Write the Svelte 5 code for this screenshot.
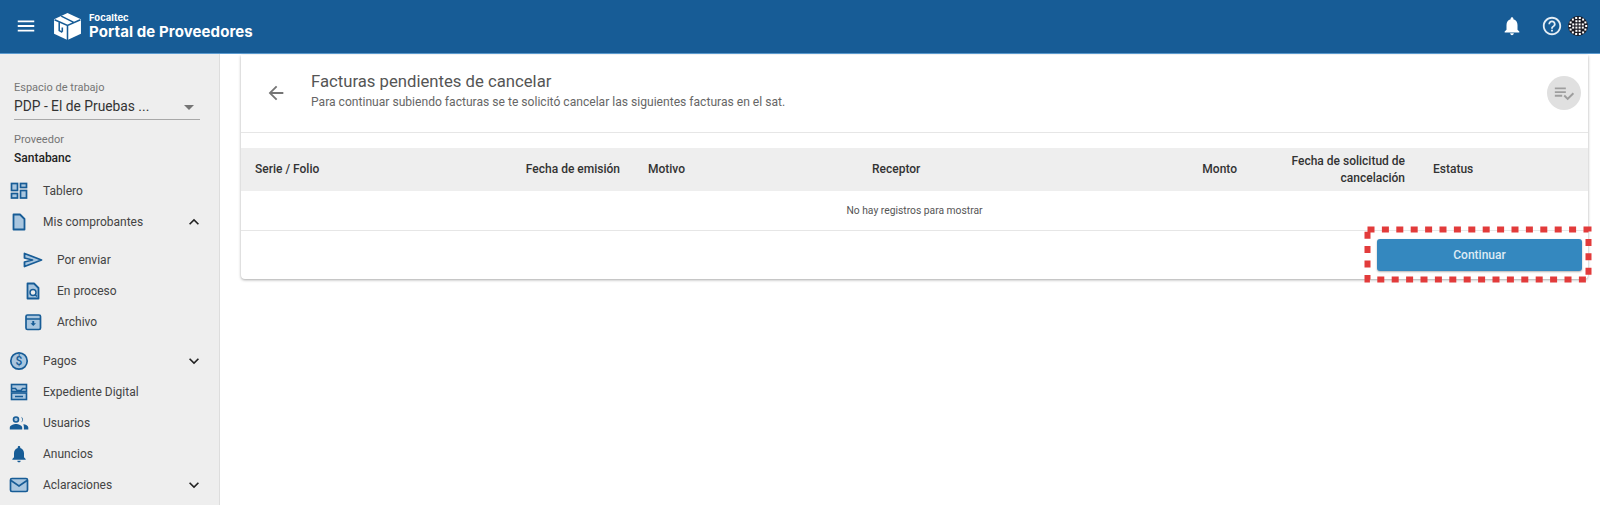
<script lang="ts">
  // avatar: ring of dots round a small centre grid
  const ring = Array.from({ length: 14 }, (_, i) => {
    const a = (i / 14) * Math.PI * 2;
    return { x: 10 + 8.2 * Math.cos(a), y: 10 + 8.2 * Math.sin(a) };
  });
  const grid: { x: number; y: number }[] = [];
  for (const x of [5.2, 8.4, 11.6, 14.8]) {
    for (const y of [5.2, 8.4, 11.6, 14.8]) {
      if (Math.hypot(x - 10, y - 10) < 6.4) grid.push({ x, y });
    }
  }
  const avatarDots = [...ring, ...grid];

  const columns = [
    { label: "Serie / Folio", cls: "" },
    { label: "Fecha de emisión", cls: "right" },
    { label: "Motivo", cls: "" },
    { label: "Receptor", cls: "" },
    { label: "Monto", cls: "right" },
    { label: "Fecha de solicitud de cancelación", cls: "right" },
    { label: "Estatus", cls: "" },
  ];
</script>

<div class="page">
  <header class="topbar">
    <button class="plain menu" aria-label="Menú">
      <svg viewBox="0 0 24 24" width="22" height="22"><path fill="#fff" d="M3 18h18v-2H3v2zm0-5h18v-2H3v2zm0-7v2h18V6H3z" /></svg>
    </button>
    <svg class="logo" viewBox="0 0 28 28" width="29" height="29">
      <path fill="#fff" d="M14 1 27 7v14L14 27 1 21V7z" />
      <path fill="none" stroke="#175c96" stroke-width="1.500" d="M14 13v14M1.500 7.500 14 13l12.500-5.500M8 4l12 6M6 10v8l3 1.500M9 15v4" />
    </svg>
    <div class="brand">
      <span class="brand-small">Focaltec</span>
      <span class="brand-big">Portal de Proveedores</span>
    </div>
    <div class="top-actions">
      <svg viewBox="0 0 24 24" width="22" height="22"><path fill="#fff" d="M12 22c1.100 0 2-.9 2-2h-4c0 1.100.89 2 2 2zm6-6v-5c0-3.070-1.640-5.640-4.500-6.320V4c0-.83-.67-1.500-1.500-1.500s-1.500.67-1.500 1.500v.68C7.630 5.360 6 7.920 6 11v5l-2 2v1h16v-1l-2-2z" /></svg>
      <svg class="help" viewBox="0 0 24 24" width="22" height="22"><path fill="#e4edf5" d="M11 18h2v-2h-2v2zm1-16C6.480 2 2 6.480 2 12s4.480 10 10 10 10-4.480 10-10S17.520 2 12 2zm0 18c-4.410 0-8-3.590-8-8s3.590-8 8-8 8 3.590 8 8-3.590 8-8 8zm0-14c-2.210 0-4 1.790-4 4h2c0-1.100.9-2 2-2s2 .9 2 2c0 2-3 1.750-3 5h2c0-2.250 3-2.500 3-5 0-2.210-1.790-4-4-4z" /></svg>
      <svg class="avatar" viewBox="0 0 20 20" width="20" height="20">
        <circle cx="10" cy="10" r="10" fill="#1b1b24" />
        {#each avatarDots as dot}
          <rect x={dot.x - 1} y={dot.y - 1} width="2" height="2" fill="#fff" />
        {/each}
      </svg>
    </div>
  </header>

  <div class="body">
    <aside class="sidebar">
      <div class="field">
        <span class="field-label">Espacio de trabajo</span>
        <div class="select">
          <span>PDP - El de Pruebas ...</span>
          <i class="caret"></i>
        </div>
      </div>
      <div class="supplier">
        <span class="field-label">Proveedor</span>
        <strong>Santabanc</strong>
      </div>

      <nav class="nav">
        <a class="item">
          <svg viewBox="0 0 20 20" width="20" height="20"><g fill="#a9c6df" stroke="#175c96" stroke-width="1.700"><rect x="2.500" y="2.500" width="6" height="7" /><rect x="11.500" y="2.500" width="6" height="4" /><rect x="2.500" y="12.500" width="6" height="4.500" /><rect x="11.500" y="9.500" width="6" height="7.500" /></g></svg>
          <span>Tablero</span>
        </a>
        <a class="item">
          <svg viewBox="0 0 20 20" width="20" height="20"><path fill="#a9c6df" stroke="#175c96" stroke-width="1.800" stroke-linejoin="round" d="M4.500 2.500h6.500L15.500 7v10.500h-11z" /></svg>
          <span>Mis comprobantes</span>
          <svg class="chev" viewBox="0 0 24 24" width="20" height="20"><path d="M12 8l-6 6 1.410 1.410L12 10.830l4.590 4.580L18 14z" /></svg>
        </a>

        <div class="sub">
          <a class="item">
            <svg viewBox="0 0 20 20" width="20" height="20"><path fill="#a9c6df" stroke="#175c96" stroke-width="1.800" stroke-linejoin="round" d="M1.500 3.500 18.500 10 1.500 16.500V12l8-2-8-2z" /></svg>
            <span>Por enviar</span>
          </a>
          <a class="item">
            <svg viewBox="0 0 20 20" width="20" height="20"><path fill="#a9c6df" stroke="#175c96" stroke-width="1.800" stroke-linejoin="round" d="M4.500 2.500h6.500L15.500 7v10.500h-11z" /><circle cx="10" cy="11.500" r="3" fill="#eee" stroke="#175c96" stroke-width="1.500" /><path stroke="#175c96" stroke-width="1.500" d="m12 13.500 2 2" /></svg>
            <span>En proceso</span>
          </a>
          <a class="item">
            <svg viewBox="0 0 20 20" width="20" height="20"><rect x="3" y="3" width="14.500" height="14.500" rx="1.500" fill="#a9c6df" stroke="#175c96" stroke-width="1.700" /><path stroke="#175c96" stroke-width="1.500" d="M3 7h14.500" /><path fill="#175c96" d="M9.300 9h1.900v2.200h1.800l-2.750 2.800-2.750-2.800h1.800z" /></svg>
            <span>Archivo</span>
          </a>
        </div>

        <a class="item">
          <svg viewBox="0 0 20 20" width="20" height="20"><circle cx="10" cy="10" r="8.200" fill="#a9c6df" stroke="#175c96" stroke-width="1.700" /><text x="10" y="14.200" class="dollar">$</text></svg>
          <span>Pagos</span>
          <svg class="chev" viewBox="0 0 24 24" width="20" height="20"><path d="M16.590 8.590L12 13.170 7.410 8.590 6 10l6 6 6-6z" /></svg>
        </a>
        <a class="item">
          <svg viewBox="0 0 20 20" width="20" height="20"><g fill="#a9c6df" stroke="#175c96" stroke-width="1.600"><rect x="2.500" y="2.500" width="15" height="7" /><rect x="2.500" y="11" width="15" height="6.500" /></g><path fill="none" stroke="#175c96" stroke-width="1.400" d="M2.500 6.500h4l1.500 2h4l1.500-2h4M6 14.500h8" /></svg>
          <span>Expediente Digital</span>
        </a>
        <a class="item">
          <svg viewBox="0 0 20 20" width="20" height="20"><circle cx="7" cy="6.500" r="2.500" fill="#a9c6df" stroke="#175c96" stroke-width="1.600" /><path fill="#175c96" d="M12.300 3.800a3.200 3.200 0 0 1 0 5.600 5.200 5.200 0 0 0 0-5.600zM.8 16.500v-2c0-2.300 4-3.500 6.200-3.500s6.200 1.200 6.200 3.500v2zM14.300 11.300c2.400.3 5 1.300 5 3.200v2h-4.400v-2c0-1.200-.2-2.300-.6-3.200z" /></svg>
          <span>Usuarios</span>
        </a>
        <a class="item">
          <svg viewBox="0 0 24 24" width="20" height="20"><path fill="#175c96" d="M12 22c1.100 0 2-.9 2-2h-4c0 1.100.89 2 2 2zm6-6v-5c0-3.070-1.640-5.640-4.500-6.320V4c0-.83-.67-1.500-1.500-1.500s-1.500.67-1.500 1.500v.68C7.630 5.360 6 7.920 6 11v5l-2 2v1h16v-1l-2-2z" /></svg>
          <span>Anuncios</span>
        </a>
        <a class="item">
          <svg viewBox="0 0 20 20" width="20" height="20"><rect x="1.500" y="3.500" width="17" height="13" rx="1.500" fill="#a9c6df" stroke="#175c96" stroke-width="1.700" /><path fill="none" stroke="#175c96" stroke-width="1.600" d="m2 5.500 8 5.500 8-5.500" /></svg>
          <span>Aclaraciones</span>
          <svg class="chev" viewBox="0 0 24 24" width="20" height="20"><path d="M16.590 8.590L12 13.170 7.410 8.590 6 10l6 6 6-6z" /></svg>
        </a>
      </nav>
    </aside>

    <main class="content">
      <section class="card">
        <div class="card-head">
          <svg class="back" viewBox="0 0 24 24" width="22" height="22"><path d="M20 11H7.830l5.590-5.590L12 4l-8 8 8 8 1.410-1.410L7.830 13H20v-2z" /></svg>
          <div class="titles">
            <h1>Facturas pendientes de cancelar</h1>
            <p>Para continuar subiendo facturas se te solicitó cancelar las siguientes facturas en el sat.</p>
          </div>
          <button class="round" aria-label="Revisar">
            <svg viewBox="0 0 24 24" width="22" height="22"><path d="M14 10H2v2h12v-2zm0-4H2v2h12V6zM2 16h8v-2H2v2zm19.500-4.500L23 13l-6.990 7-4.510-4.500L13 14l3.010 3 5.490-5.500z" /></svg>
          </button>
        </div>

        <div class="table">
          <div class="thead">
            {#each columns as col}
              <div class={col.cls}>{col.label}</div>
            {/each}
          </div>
          <div class="empty">No hay registros para mostrar</div>
        </div>

        <div class="card-foot">
          <div class="highlight">
            <button class="primary">Continuar</button>
            <svg class="dashes" width="228" height="57" viewBox="0 0 228 57">
              <rect x="3.500" y="3.500" width="221" height="50" />
            </svg>
          </div>
        </div>
      </section>
    </main>
  </div>
</div>

<style>
  :global(body) {
    margin: 0;
    background: #fff;
    font-family: Roboto, "Liberation Sans", sans-serif;
  }

  .page {
    height: 505px;
    display: flex;
    flex-direction: column;
    overflow: hidden;
  }

  .topbar {
    height: 52px;
    flex: none;
    display: flex;
    align-items: center;
    background: #175c96;
    border-bottom: 1px solid #5b9bd0;
    padding: 0 12px 1px 15px;
  }

  .plain {
    background: none;
    border: none;
    padding: 0;
    display: flex;
  }

  .logo {
    margin-left: 16px;
  }

  .brand {
    display: flex;
    flex-direction: column;
    margin-left: 7px;
    color: #fff;
    font-family: Inter, "Open Sans", sans-serif;
    font-weight: 700;
  }

  .brand-small {
    font-size: 9.500px;
    line-height: 10px;
  }

  .brand-big {
    font-size: 15px;
    line-height: 17px;
    letter-spacing: 0.1px;
  }

  .top-actions {
    margin-left: auto;
    display: flex;
    align-items: center;
  }

  .help {
    margin-left: 18px;
  }

  .avatar {
    margin-left: 5px;
  }

  .body {
    flex: 1;
    display: flex;
    min-height: 0;
  }

  .sidebar {
    width: 219px;
    flex: none;
    background: #eeeeee;
    border-right: 1px solid #dddddd;
    padding-top: 27px;
  }

  .field {
    margin: 0 19px 0 14px;
    display: flex;
    flex-direction: column;
  }

  .field-label {
    font-size: 11px;
    line-height: 14px;
    color: #757575;
  }

  .select {
    display: flex;
    align-items: center;
    justify-content: space-between;
    height: 22px;
    padding: 0 6px 2px 0;
    border-bottom: 1px solid #a8a8a8;
    font-size: 13.800px;
    color: #333;
  }

  .caret {
    border-left: 5px solid transparent;
    border-right: 5px solid transparent;
    border-top: 5px solid #757575;
    margin-top: 2px;
  }

  .supplier {
    margin: 13px 14px 0;
    display: flex;
    flex-direction: column;
    gap: 4px;
  }

  .supplier strong {
    font-size: 12px;
    line-height: 14px;
    font-weight: 500;
    color: #222;
  }

  .nav {
    margin-top: 10px;
  }

  .item {
    height: 31px;
    display: flex;
    align-items: center;
    padding-left: 9px;
    font-size: 12px;
    color: #444;
  }

  .item > span {
    margin-left: 14px;
  }

  .chev {
    margin-left: auto;
    margin-right: 15px;
    fill: #222;
  }

  .sub {
    padding: 7px 0 8px;
  }

  .sub .item {
    padding-left: 23px;
  }

  .dollar {
    font-size: 12px;
    font-weight: 500;
    text-anchor: middle;
    fill: #175c96;
  }

  .content {
    flex: 1;
    padding: 1px 12px 0 21px;
    min-width: 0;
  }

  .card {
    background: #fff;
    border-radius: 0 0 4px 4px;
    box-shadow: 0 1px 3px rgba(0, 0, 0, 0.35);
  }

  .card-head {
    height: 75px;
    display: flex;
    align-items: center;
    padding: 0 7px 2px 24px;
    border-bottom: 1px solid #e6e6e6;
  }

  .back {
    fill: #757575;
  }

  .titles {
    margin-left: 24px;
    margin-top: -4px;
  }

  h1 {
    margin: 0;
    font-size: 16.700px;
    line-height: 22px;
    font-weight: 400;
    color: #555;
  }

  p {
    margin: 1px 0 0;
    font-size: 12.100px;
    line-height: 16px;
    color: #666;
  }

  .round {
    margin-left: auto;
    width: 34px;
    height: 34px;
    border: none;
    border-radius: 50%;
    background: #e0e0e0;
    padding: 0;
    display: flex;
    align-items: center;
    justify-content: center;
    fill: #9e9e9e;
  }

  .table {
    margin-top: 15px;
  }

  .thead {
    height: 43px;
    display: grid;
    grid-template-columns: 250px 143px 224px 312px 81px 168px 1fr;
    align-items: center;
    background: #eeeeee;
    font-size: 12px;
    line-height: 17px;
    font-weight: 500;
    color: #333;
  }

  .thead > div {
    padding: 0 13px 0 14px;
  }

  .thead > .right {
    text-align: right;
    padding-right: 14px;
  }

  .empty {
    height: 39px;
    display: flex;
    align-items: center;
    justify-content: center;
    border-bottom: 1px solid #e6e6e6;
    font-size: 10.300px;
    color: #555;
  }

  .card-foot {
    height: 48px;
    display: flex;
    align-items: center;
    justify-content: flex-end;
    padding-right: 6px;
  }

  .highlight {
    position: relative;
    display: flex;
  }

  .primary {
    width: 205px;
    height: 32px;
    border: none;
    border-radius: 3px;
    background: #3488bf;
    color: #dcebf5;
    font-family: Roboto, sans-serif;
    font-size: 12px;
    font-weight: 500;
    box-shadow: 0 1px 2px rgba(0, 0, 0, 0.3);
  }

  .dashes {
    position: absolute;
    left: -13px;
    top: -13px;
    fill: none;
  }

  .dashes rect {
    stroke: #e23b3b;
    stroke-width: 6;
    stroke-dasharray: 7 7.400;
  }
</style>
